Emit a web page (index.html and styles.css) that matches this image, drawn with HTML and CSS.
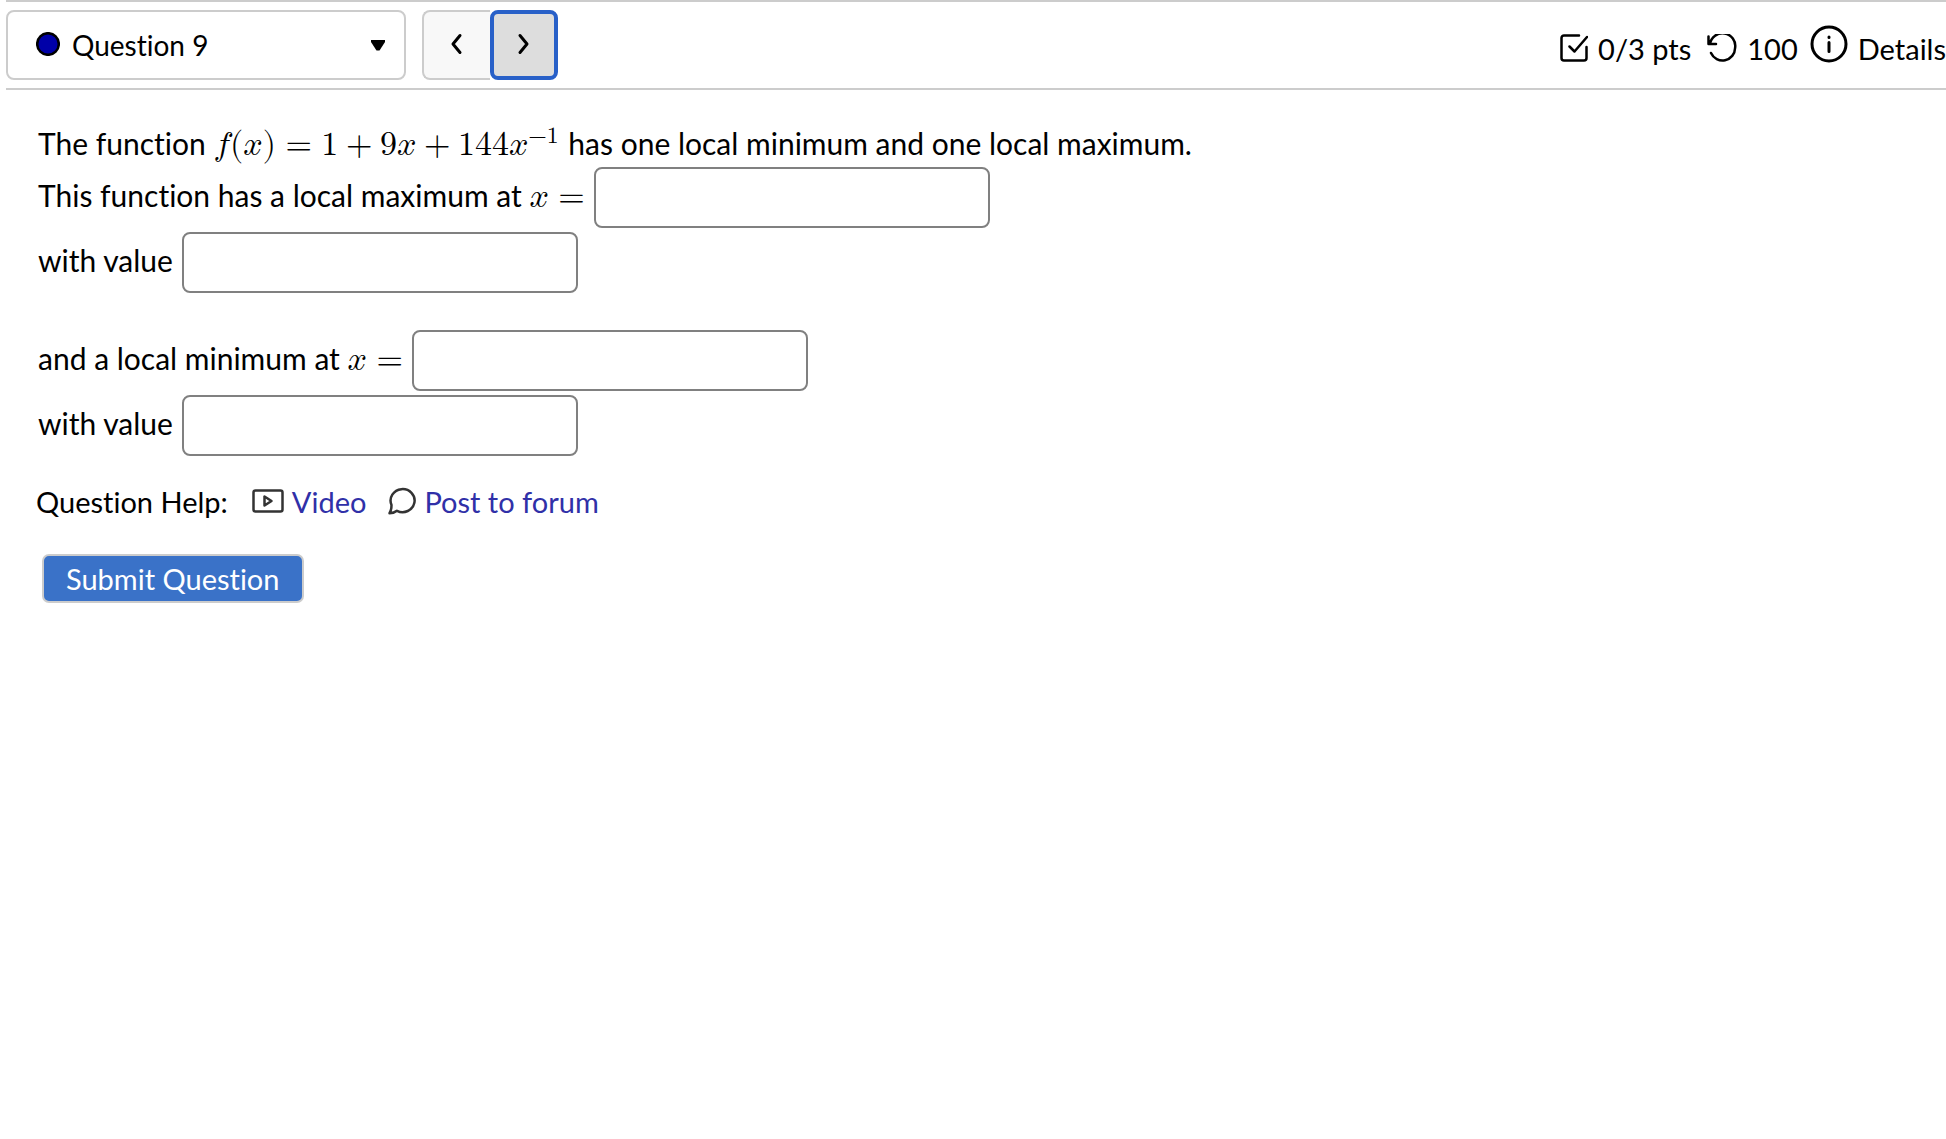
FILE: index.html
```html
<!DOCTYPE html>
<html lang="en">
<head>
  <meta charset="UTF-8">
  <meta name="viewport" content="width=device-width, initial-scale=1.0">
  <title>Question 9</title>
  <link rel="stylesheet" href="styles.css">
</head>
<body>
  <header class="question-bar">
    <div class="question-picker">
      <svg class="dot" viewBox="0 0 24 24" aria-hidden="true"><circle cx="12" cy="12" r="10.8"/></svg>
      <select aria-label="Select question">
        <option>Question 9</option>
      </select>
      <svg class="arrow" viewBox="0 0 14 12" aria-hidden="true"><path d="M0 1h14v2L8.500 11.500h-3L0 3z"/></svg>
    </div>
    <div class="pager">
      <button type="button" class="prev" aria-label="Previous question">
        <svg viewBox="0 0 14 22" aria-hidden="true"><path d="M10 2.500 3 11l7 8.500"/></svg>
      </button>
      <button type="button" class="next" aria-label="Next question">
        <svg viewBox="0 0 14 22" aria-hidden="true"><path d="m3 2.500 7 8.500-7 8.500"/></svg>
      </button>
    </div>
    <div class="status">
      <svg class="icon" viewBox="0 0 28 28" aria-hidden="true"><path d="M19 1.500H4A2.500 2.500 0 0 0 1.500 4v20A2.500 2.500 0 0 0 4 26.500h20a2.500 2.500 0 0 0 2.500-2.500V13M9.500 12.500l5 5L27 3"/></svg>
      <span>0/3 pts</span>
      <svg class="icon retry" viewBox="0 0 30 28" aria-hidden="true"><path d="M1.500 2.500V10H9M3 10A12.600 12.600 0 0 1 28.100 14 12.600 12.600 0 0 1 4 19"/></svg>
      <span>100</span>
      <svg class="icon info" viewBox="0 0 38 38" aria-hidden="true"><circle cx="19" cy="19" r="17"/><path d="M19 17.500v9M19 12v.5"/></svg>
      <span>Details</span>
    </div>
  </header>

  <main class="question">
    <p class="line">The function
      <math><mi>f</mi><mo stretchy="false">(</mo><mi>x</mi><mo stretchy="false">)</mo><mo>=</mo><mn>1</mn><mo>+</mo><mn>9</mn><mi>x</mi><mo>+</mo><mn>144</mn><msup><mi>x</mi><mrow><mo>−</mo><mn>1</mn></mrow></msup></math>
      has one local minimum and one local maximum.</p>
    <div class="row">
      <label for="max-x">This function has a local maximum at <math><mi>x</mi><mo rspace="0">=</mo></math></label>
      <input type="text" id="max-x">
    </div>
    <div class="row">
      <label for="max-value">with value</label>
      <input type="text" id="max-value">
    </div>
    <div class="row spaced">
      <label for="min-x">and a local minimum at <math><mi>x</mi><mo rspace="0">=</mo></math></label>
      <input type="text" id="min-x">
    </div>
    <div class="row">
      <label for="min-value">with value</label>
      <input type="text" id="min-value">
    </div>
  </main>

  <div class="help">
    <span class="help-title">Question Help:</span>
    <a href="#video">
      <svg class="video" viewBox="0 0 32 24" aria-hidden="true"><rect x="1.500" y="1.500" width="29" height="21" rx="2"/><path d="M12.500 7.500v9l7-4.500z"/></svg>
      <span>Video</span>
    </a>
    <a href="#forum">
      <svg class="forum" viewBox="0 0 28 28" aria-hidden="true"><path d="M3.500 18A12 11.500 0 1 1 9 23.800c-2 1.700-4.500 2.400-7.500 2.400C3 24 3.500 21.500 3.500 18z"/></svg>
      <span>Post to forum</span>
    </a>
  </div>

  <button type="submit" class="submit">Submit Question</button>
</body>
</html>
```
FILE: styles.css
```css
* {
  box-sizing: border-box;
}
body {
  margin: 0 0 0 6px;
  font-family: "Trebuchet MS", Lato, sans-serif;
  font-size: 29px;
  font-variant-ligatures: none;
  line-height: 36px;
  color: #000;
  background: #fff;
}
svg {
  flex: none;
  fill: none;
  stroke: #000;
  stroke-width: 2.500;
  stroke-linecap: round;
  stroke-linejoin: round;
}
button, input, select {
  font: inherit;
  font-variant-ligatures: none;
  color: inherit;
}
.question-bar {
  display: flex;
  align-items: center;
  height: 90px;
  border-top: 2px solid #ccc;
  border-bottom: 2px solid #ccc;
}
.question-picker {
  display: flex;
  align-items: center;
  width: 400px;
  height: 70px;
  padding: 0 19px 0 28px;
  border: 2px solid #ccc;
  border-radius: 8px;
}
.question-picker .dot {
  width: 24px;
  margin-bottom: 2px;
  fill: #0000a8;
}
.question-picker .arrow {
  width: 14px;
  fill: #000;
  stroke: none;
}
.question-picker select {
  flex: 1;
  height: 66px;
  padding: 0 12px;
  border: none;
  background: transparent;
  appearance: none;
  font-size: 28px;
}
.pager {
  display: flex;
  margin-left: 16px;
}
.pager button {
  display: flex;
  align-items: center;
  justify-content: center;
  width: 68px;
  height: 70px;
  border: 2px solid #ccc;
  border-radius: 8px;
}
.pager svg {
  width: 14px;
  margin-bottom: 2px;
  stroke-width: 3;
}
.pager .prev {
  border-right: none;
  border-radius: 8px 0 0 8px;
  background: #f8f8f8;
}
.pager .next {
  border: 4px solid #2860c8;
  background: #ddd;
}
.status {
  display: flex;
  align-items: center;
  gap: 10px;
  margin-left: auto;
  padding-top: 8px;
}
.status .icon {
  width: 28px;
  margin-bottom: 2px;
}
.status .retry {
  width: 30px;
  margin-left: 6px;
}
.status .info {
  width: 38px;
  margin-left: 2px;
  margin-bottom: 10px;
  stroke-width: 3;
}
.question {
  padding: 35px 32px 0;
  font-size: 30px;
}
.line {
  margin: 0;
  height: 42px;
}
math {
  font-family: "Latin Modern Math", "DejaVu Math TeX Gyre", "Liberation Serif", serif;
  font-size: 34px;
  line-height: 36px;
}
.row {
  display: flex;
  align-items: center;
  gap: 9px;
  margin-bottom: 4px;
}
.row.spaced {
  margin-top: 37px;
}
.row label {
  margin-bottom: 6px;
}
.row input {
  width: 396px;
  height: 61px;
  padding: 8px;
  border: 2px solid #808080;
  border-radius: 8px;
  background: #fff;
}
.help {
  display: flex;
  align-items: center;
  gap: 22px;
  margin: 28px 30px 34px;
}
.help-title {
  margin-right: 2px;
}
.help a {
  display: flex;
  align-items: center;
  gap: 8px;
  color: #3030a8;
  text-decoration: none;
}
.help svg {
  margin-bottom: 3px;
  stroke: #333;
}
.help .video {
  width: 32px;
}
.help .forum {
  width: 28px;
}
.submit {
  margin-left: 36px;
  height: 49px;
  padding: 0 22px;
  border: 2px solid #ccc;
  border-radius: 7px;
  color: #fff;
  background: #3a72c8;
}
```
